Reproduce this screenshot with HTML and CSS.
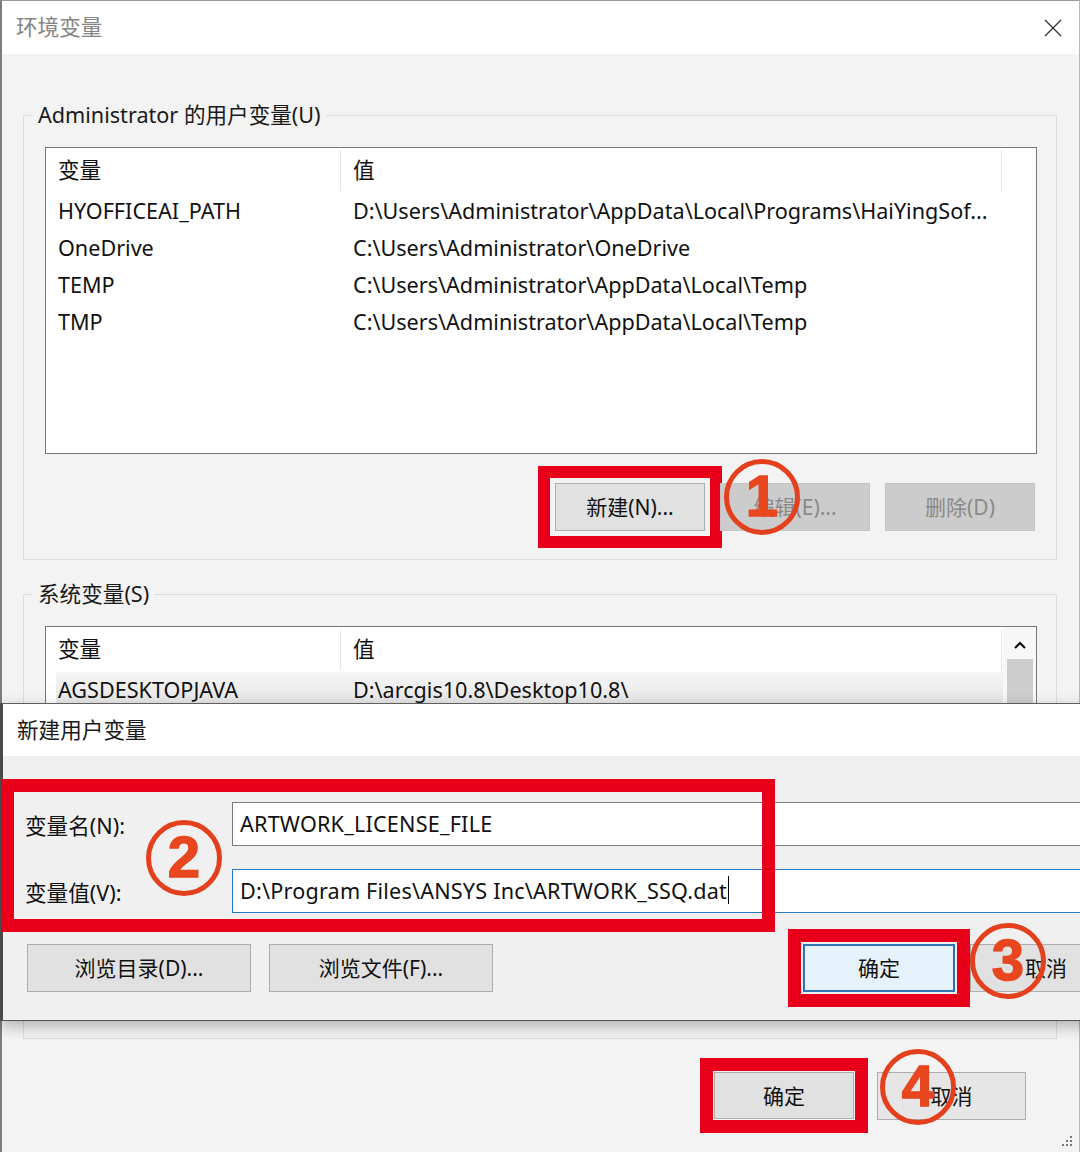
FILE: index.html
```html
<!DOCTYPE html>
<html lang="zh-CN">
<head>
<meta charset="utf-8">
<title>环境变量</title>
<link rel="stylesheet" href="styles.css">
</head>
<body>
<div class="window">
  <div class="titlebar">
    <span class="title">环境变量</span>
    <svg class="close" width="18" height="18" viewBox="0 0 18 18"><path d="M1 1L17 17M17 1L1 17" stroke="#333" stroke-width="1.3" fill="none"/></svg>
  </div>
  <div class="client">
    <fieldset class="group group-user">
      <legend>Administrator 的用户变量(U)</legend>
      <div class="listview">
        <div class="lv-main">
          <div class="lv-head"><div class="c1">变量</div><div class="c2">值</div></div>
          <div class="lv-row"><div class="c1">HYOFFICEAI_PATH</div><div class="c2">D:\Users\Administrator\AppData\Local\Programs\HaiYingSof...</div></div>
          <div class="lv-row"><div class="c1">OneDrive</div><div class="c2">C:\Users\Administrator\OneDrive</div></div>
          <div class="lv-row"><div class="c1">TEMP</div><div class="c2">C:\Users\Administrator\AppData\Local\Temp</div></div>
          <div class="lv-row"><div class="c1">TMP</div><div class="c2">C:\Users\Administrator\AppData\Local\Temp</div></div>
        </div>
      </div>
      <div class="btn-row">
        <button class="btn mark-box">新建(N)...</button>
        <button class="btn" disabled>编辑(E)...</button>
        <button class="btn" disabled>删除(D)</button>
      </div>
    </fieldset>
    <fieldset class="group group-sys">
      <legend>系统变量(S)</legend>
      <div class="listview">
        <div class="lv-main">
          <div class="lv-head"><div class="c1">变量</div><div class="c2">值</div></div>
          <div class="lv-row lv-sel"><div class="c1">AGSDESKTOPJAVA</div><div class="c2">D:\arcgis10.8\Desktop10.8\</div></div>
        </div>
        <div class="scrollbar">
          <svg class="arrow" width="14" height="9" viewBox="0 0 14 9"><path d="M2 8L7 3L12 8" stroke="#111" stroke-width="2.2" fill="none"/></svg>
          <div class="thumb"></div>
        </div>
      </div>
      <div class="btn-row">
        <button class="btn">新建(W)...</button>
        <button class="btn">编辑(I)...</button>
        <button class="btn">删除(L)</button>
      </div>
    </fieldset>
    <div class="footer">
      <button class="btn btn-ok mark-box-4">确定</button>
      <button class="btn btn-cancel">取消</button>
    </div>
  </div>

  <div class="dialog">
    <div class="dlg-title">新建用户变量</div>
    <div class="dlg-body">
      <div class="form">
        <label class="lbl">变量名(N):</label>
        <div class="input">ARTWORK_LICENSE_FILE</div>
        <label class="lbl">变量值(V):</label>
        <div class="input input-focus">D:\Program Files\ANSYS Inc\ARTWORK_SSQ.dat<span class="caret"></span></div>
      </div>
      <div class="dlg-buttons">
        <button class="btn btn-browse">浏览目录(D)...</button>
        <button class="btn btn-browse">浏览文件(F)...</button>
        <button class="btn btn-default mark-box-3">确定</button>
        <button class="btn btn-dcancel">取消</button>
      </div>
    </div>
    <div class="redbox"></div>
  </div>

  <div class="mark mark-1">1</div>
  <div class="mark mark-2">2</div>
  <div class="mark mark-3">3</div>
  <div class="mark mark-4">4</div>

  <svg class="grip" width="12" height="12" viewBox="0 0 12 12">
    <rect x="9" y="1" width="2" height="2" fill="#777"/>
    <rect x="9" y="5" width="2" height="2" fill="#777"/>
    <rect x="5" y="5" width="2" height="2" fill="#777"/>
    <rect x="9" y="9" width="2" height="2" fill="#777"/>
    <rect x="5" y="9" width="2" height="2" fill="#777"/>
    <rect x="1" y="9" width="2" height="2" fill="#777"/>
  </svg>
</div>
</body>
</html>
```

FILE: styles.css
```css
* { box-sizing: border-box; }

html, body {
  margin: 0;
  padding: 0;
}

body {
  width: 1080px;
  height: 1152px;
  overflow: hidden;
  background: #f3f3f3;
  font-family: "Noto Sans", "Noto Sans CJK SC", sans-serif;
  font-size: 21.6px;
  color: #111;
}

.window {
  position: relative;
  height: 1152px;
  border-left: 2px solid #7d7d7d;
  border-top: 1px solid #9a9a9a;
  border-right: 1px solid #b8b8b8;
  background: #f3f3f3;
  display: flex;
  flex-direction: column;
}

.titlebar {
  height: 53px;
  flex: none;
  background: #fff;
  display: flex;
  align-items: center;
  justify-content: space-between;
  padding: 0 17px 5px 14px;
}

.close {
  margin-top: 5px;
}

.title {
  color: #858585;
  font-size: 21.6px;
}

.client {
  padding-top: 47px;
}

.group {
  margin: 0 22px 0 21px;
  border: 1px solid #dcdcdc;
  padding: 18px 19px 28px 21px;
  min-width: 0;
}

.group-sys {
  margin-top: 20px;
}

.group legend {
  padding: 0 5px;
  margin-left: -12px;
  line-height: 28px;
  font-size: 21.6px;
  color: #1a1a1a;
}

.listview {
  height: 307px;
  border: 1px solid #777;
  background: #fff;
  display: flex;
}

.lv-main {
  flex: 1;
  min-width: 0;
}

.lv-head {
  height: 45px;
  display: flex;
  align-items: center;
}

.lv-head .c1,
.lv-head .c2 {
  height: 41px;
  display: flex;
  align-items: center;
  padding-bottom: 5px;
  border-right: 1px solid #e6e6e6;
}

.lv-head .c2 {
  width: 661px;
}

.c1 {
  width: 295px;
  flex: none;
  padding-left: 12px;
  white-space: nowrap;
}

.c2 {
  padding-left: 12px;
  white-space: nowrap;
}

.lv-row {
  height: 37px;
  line-height: 35px;
  display: flex;
  white-space: nowrap;
}

.lv-sel {
  margin-left: 10px;
  background: linear-gradient(#f6f6f6, #e3e3e3);
}

.lv-sel .c1 {
  width: 285px;
  padding-left: 2px;
}

.scrollbar {
  width: 33px;
  flex: none;
  background: #f7f7f7;
  display: flex;
  flex-direction: column;
  align-items: center;
  padding-top: 13px;
}

.arrow {
  display: block;
}

.thumb {
  margin-top: 10px;
  width: 26px;
  height: 200px;
  background: #cdcdcd;
}

.btn-row {
  margin-top: 29px;
  display: flex;
  justify-content: flex-end;
  gap: 15px;
  padding-right: 2px;
}

.btn {
  font-family: inherit;
  font-size: 21px;
  color: #111;
  height: 48px;
  width: 150px;
  background: #e1e1e1;
  border: 1px solid #adadad;
  padding: 0 0 2px;
  margin: 0;
}

.btn:disabled {
  background: #cccccc;
  border-color: #c4c4c4;
  color: #8a8a8a;
}

.mark-box {
  outline: 12px solid #e8001b;
  outline-offset: 5px;
}

.footer {
  margin-top: 33px;
  display: flex;
  justify-content: flex-end;
  gap: 23px;
  padding-right: 53px;
}

.btn-ok {
  width: 140px;
  height: 47px;
}

.btn-cancel {
  width: 149px;
  height: 48px;
  background: #e6e6e6;
}

.mark-box-4 {
  outline: 13px solid #e8001b;
  outline-offset: 1px;
}

/* dialog */
.dialog {
  position: absolute;
  top: 702px;
  left: -2px;
  width: 1146px;
  border-top: 1px solid #5e5e5e;
  border-left: 3px solid #4a4a4a;
  border-bottom: 1px solid #555;
  box-shadow: 0 5px 14px rgba(0, 0, 0, 0.28);
  background: #f0f0f0;
  z-index: 2;
}

.dlg-title {
  height: 52px;
  background: #fff;
  padding: 0 0 3px 14px;
  display: flex;
  align-items: center;
  font-size: 21.6px;
  color: #1a1a1a;
}

.dlg-body {
  padding: 46px 24px 28px 24px;
}

.form {
  display: grid;
  grid-template-columns: 205px 1fr;
  grid-auto-rows: 44px;
  row-gap: 23px;
  align-items: center;
}

.lbl {
  font-size: 21.6px;
  color: #111;
  margin-left: -2px;
}

.input {
  height: 44px;
  background: #fff;
  border: 1px solid #7a7a7a;
  padding: 0 0 2px 7px;
  display: flex;
  align-items: center;
  white-space: nowrap;
  font-size: 21.6px;
  letter-spacing: 0.2px;
}

.input-focus {
  border-color: #2a78c8;
}

.caret {
  display: inline-block;
  width: 1px;
  height: 28px;
  background: #000;
  margin-left: 1px;
}

.dlg-buttons {
  margin-top: 31px;
  display: flex;
  gap: 18px;
}

.btn-browse {
  width: 224px;
}

.btn-default {
  margin-left: auto;
  width: 152px;
  background: #e5f1fb;
  border: 2px solid #3272b0;
}

.btn-dcancel {
  width: 152px;
  margin-left: -3px;
}

.mark-box-3 {
  outline: 13px solid #e8001b;
  outline-offset: 2px;
}

.redbox {
  position: absolute;
  left: -2px;
  top: 75px;
  width: 774px;
  height: 153px;
  border: 13px solid #e8001b;
}

/* annotation circles */
.mark {
  position: absolute;
  width: 76px;
  height: 76px;
  border: 5px solid #e4401e;
  border-radius: 50%;
  display: flex;
  align-items: center;
  justify-content: center;
  padding-bottom: 2px;
  font-family: "Liberation Sans", "Noto Sans", sans-serif;
  font-weight: bold;
  font-size: 58px;
  line-height: 1;
  color: #e8461f;
  -webkit-text-stroke: 1.5px #e8461f;
  z-index: 5;
}

.mark-1 { left: 722px; top: 458px; }
.mark-2 { left: 144px; top: 819px; }
.mark-3 { left: 968px; top: 922px; }
.mark-4 { left: 878px; top: 1048px; }

.grip {
  position: absolute;
  right: 6px;
  bottom: 5px;
}
```
